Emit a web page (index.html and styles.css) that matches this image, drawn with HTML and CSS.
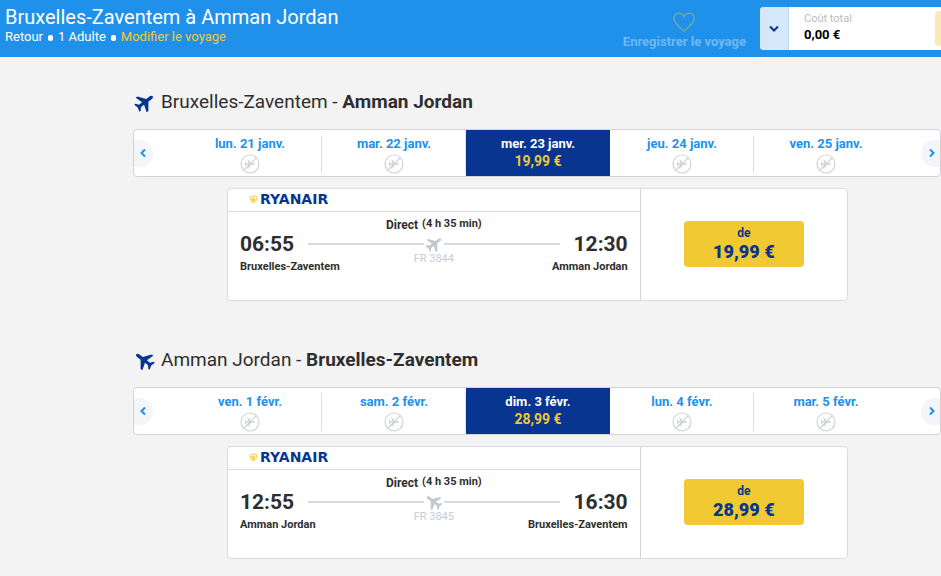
FILE: index.html
```html
<!DOCTYPE html>
<html lang="fr">
<head>
  <meta charset="UTF-8" />
  <meta name="viewport" content="width=device-width, initial-scale=1.0"/>
  <title>Bruxelles-Zaventem à Amman Jordan</title>
  <link rel="stylesheet" href="styles.css">
</head>
<body>

  <!-- Shared icons -->
  <svg class="sprite" aria-hidden="true">
    <symbol id="plane" viewBox="0 0 24 24">
      <path transform="rotate(53 12 12)" d="M12-1c-1.400 0-2.200 1.700-2.200 3.500v5L.5 14.500v2.800L10 14.200v5L6.500 22v2.200l5.500-1.500 5.500 1.500V22L14 19.200v-5l9.500 3.100v-2.800l-9.300-7v-5C14.200.7 13.400-1 12-1z"/>
    </symbol>
    <symbol id="no-flight" viewBox="0 0 20 20">
      <circle cx="10" cy="10" r="9" fill="none" stroke="currentColor" stroke-width="1.200"/>
      <path transform="translate(4 4) scale(.5) rotate(90 12 12)" fill="currentColor" d="M21 18v-2l-7.500-7V3.500c0-1-.7-2-1.500-2s-1.500 1-1.500 2V9L3 16v2l7.500-3.500V19l-3 2v1.500l4.500-1 4.500 1V21l-3-2v-4.500z"/>
      <path d="M3.500 16.500l13-13" stroke="currentColor" stroke-width="1.200"/>
    </symbol>
    <symbol id="harp" viewBox="0 0 9 9">
      <path fill="none" stroke="currentColor" d="M1 2.500C2 .5 3.500 2 5 1.200S8 1 8 2.500C8 5 6 7 4.500 8.200 3 7.500 1.500 5 1 2.500zM2.500 3l2 4M4 2.800l1 3.500M5.800 2.500L5 6"/>
    </symbol>
  </svg>

  <header class="trip-bar">
    <div class="trip">
      <h1>Bruxelles-Zaventem à Amman Jordan</h1>
      <div class="trip-info">
        <span>Retour</span><i class="dot"></i><span>1 Adulte</span><i class="dot"></i><a href="#">Modifier le voyage</a>
      </div>
    </div>
    <button class="save-trip" disabled>
      <svg width="24" height="20" viewBox="0 0 24 20"><path d="M12 19C7 14.800 1.800 11.200 1.800 6.500 1.800 3.300 4 1.200 6.700 1.200c2.300 0 4.200 1.300 5.300 3.400 1.100-2.100 3-3.400 5.300-3.400 2.700 0 4.900 2.100 4.900 5.300 0 4.700-5.200 8.300-10.200 12.500z"/></svg>
      <span>Enregistrer le voyage</span>
    </button>
    <div class="basket">
      <button class="basket-toggle" aria-label="Détails">
        <svg width="10" height="8" viewBox="0 0 10 8"><path d="M1 1.500l4 4 4-4"/></svg>
      </button>
      <div class="total">
        <span class="total-label">Coût total</span>
        <span class="total-price">0,00 €</span>
      </div>
      <button class="continue" disabled aria-label="Continuer"></button>
    </div>
  </header>

  <main>
    <!-- Outbound -->
    <section class="journey">
      <h2><svg class="plane"><use href="#plane"/></svg><span>Bruxelles-Zaventem - <b>Amman Jordan</b></span></h2>

      <div class="carousel">
        <button class="arrow left" aria-label="Précédent"><svg width="8" height="10" viewBox="0 0 8 10"><path d="M6 1.500L2.500 5 6 8.500"/></svg></button>
        <div class="days">
          <button class="day"><span>lun. 21 janv.</span><svg><use href="#no-flight"/></svg></button>
          <button class="day"><span>mar. 22 janv.</span><svg><use href="#no-flight"/></svg></button>
          <button class="day active"><span>mer. 23 janv.</span><span class="day-price">19,99 €</span></button>
          <button class="day"><span>jeu. 24 janv.</span><svg><use href="#no-flight"/></svg></button>
          <button class="day"><span>ven. 25 janv.</span><svg><use href="#no-flight"/></svg></button>
        </div>
        <button class="arrow right" aria-label="Suivant"><svg width="8" height="10" viewBox="0 0 8 10"><path d="M2 1.500L5.500 5 2 8.500"/></svg></button>
      </div>

      <div class="flight">
        <div class="flight-info">
          <div class="carrier"><svg><use href="#harp"/></svg><span>RYANAIR</span></div>
          <div class="route">
            <div class="duration"><span>Direct</span><small>(4 h 35 min)</small></div>
            <div class="times">
              <span class="time">06:55</span>
              <span class="line"></span>
              <svg class="plane"><use href="#plane"/></svg>
              <span class="line"></span>
              <span class="time">12:30</span>
            </div>
            <div class="number">FR 3844</div>
            <div class="airports"><span>Bruxelles-Zaventem</span><span>Amman Jordan</span></div>
          </div>
        </div>
        <div class="fare">
          <button class="select"><span>de</span><strong>19,99 €</strong></button>
        </div>
      </div>
    </section>

    <!-- Inbound -->
    <section class="journey inbound">
      <h2><svg class="plane"><use href="#plane"/></svg><span>Amman Jordan - <b>Bruxelles-Zaventem</b></span></h2>

      <div class="carousel">
        <button class="arrow left" aria-label="Précédent"><svg width="8" height="10" viewBox="0 0 8 10"><path d="M6 1.500L2.500 5 6 8.500"/></svg></button>
        <div class="days">
          <button class="day"><span>ven. 1 févr.</span><svg><use href="#no-flight"/></svg></button>
          <button class="day"><span>sam. 2 févr.</span><svg><use href="#no-flight"/></svg></button>
          <button class="day active"><span>dim. 3 févr.</span><span class="day-price">28,99 €</span></button>
          <button class="day"><span>lun. 4 févr.</span><svg><use href="#no-flight"/></svg></button>
          <button class="day"><span>mar. 5 févr.</span><svg><use href="#no-flight"/></svg></button>
        </div>
        <button class="arrow right" aria-label="Suivant"><svg width="8" height="10" viewBox="0 0 8 10"><path d="M2 1.500L5.500 5 2 8.500"/></svg></button>
      </div>

      <div class="flight">
        <div class="flight-info">
          <div class="carrier"><svg><use href="#harp"/></svg><span>RYANAIR</span></div>
          <div class="route">
            <div class="duration"><span>Direct</span><small>(4 h 35 min)</small></div>
            <div class="times">
              <span class="time">12:55</span>
              <span class="line"></span>
              <svg class="plane"><use href="#plane"/></svg>
              <span class="line"></span>
              <span class="time">16:30</span>
            </div>
            <div class="number">FR 3845</div>
            <div class="airports"><span>Amman Jordan</span><span>Bruxelles-Zaventem</span></div>
          </div>
        </div>
        <div class="fare">
          <button class="select"><span>de</span><strong>28,99 €</strong></button>
        </div>
      </div>
    </section>
  </main>

</body>
</html>
```
FILE: styles.css
```css
* {
  box-sizing: border-box;
}

body {
  margin: 0;
  font-family: Roboto, Arial, sans-serif;
  background: #f3f3f3;
  color: #2e2e2e;
}

button {
  font-family: inherit;
  border: none;
  padding: 0;
  background: none;
  cursor: pointer;
}

.sprite {
  display: none;
}

/* Header */
.trip-bar {
  display: flex;
  height: 57px;
  background: #2091eb;
  color: #fff;
  overflow: hidden;
}

.trip {
  flex: 1;
  padding: 6px 5px;
}

.trip h1 {
  margin: 0;
  font-size: 20px;
  font-weight: 400;
  line-height: 22px;
}

.trip-info {
  display: flex;
  align-items: center;
  font-size: 13px;
  line-height: 18px;
}

.trip-info a {
  color: #f1c933;
  text-decoration: none;
}

.dot {
  width: 5px;
  height: 6px;
  margin: 2px 5px 0;
  border-radius: 2px;
  background: #fff;
}

.save-trip {
  display: flex;
  flex-direction: column;
  align-items: center;
  padding-top: 12px;
  margin-right: 14px;
  color: #70b9f2;
  font-size: 13px;
  font-weight: 700;
  line-height: 20px;
}

.save-trip svg {
  flex: none;
  fill: none;
  stroke: #74a8a0;
  stroke-width: 1.4;
}

.basket {
  display: flex;
  width: 181px;
  height: 43px;
  margin-top: 7px;
  background: #fff;
  border-radius: 4px 0 0 4px;
}

.basket-toggle {
  width: 29px;
  border-right: 1px solid #bcdaf5;
  border-radius: 4px 0 0 4px;
  background: #d5e8f9;
}

.basket-toggle svg {
  fill: none;
  stroke: #073590;
  stroke-width: 2;
}

.total {
  flex: 1;
  display: flex;
  flex-direction: column;
  padding: 4px 15px;
}

.total-label {
  color: #b9bcc2;
  font-size: 11px;
  line-height: 15px;
}

.total-price {
  color: #000;
  font-size: 13px;
  font-weight: 700;
  line-height: 18px;
}

.continue {
  width: 6px;
  margin: 4px 0;
  border-radius: 4px 0 0 4px;
  background: #f8e9b6;
}

/* Journeys */
main {
  padding: 33px 0 0 133px;
}

.journey {
  margin-bottom: 47px;
}

.journey:last-child {
  margin-bottom: 0;
}

h2 {
  display: flex;
  align-items: center;
  gap: 5px;
  margin: 0 0 15px;
  font-size: 19px;
  font-weight: 400;
  line-height: 24px;
}

h2 .plane {
  width: 23px;
  height: 19px;
  color: #073590;
}

.plane {
  fill: currentColor;
  overflow: visible;
}

.inbound .plane {
  transform: scaleX(-1);
}

.carousel {
  position: relative;
  height: 48px;
  padding: 0 42px 0 44px;
  background: #fff;
  border: 1px solid #d1d3d8;
  border-radius: 4px;
}

.days {
  display: grid;
  grid-template-columns: repeat(5, 1fr);
  height: 100%;
}

.day {
  position: relative;
  display: flex;
  flex-direction: column;
  align-items: center;
  padding-top: 6px;
  color: #2091eb;
  font-size: 13px;
  font-weight: 700;
  line-height: 16px;
}

.day svg {
  width: 20px;
  height: 20px;
  margin-top: 2px;
  color: #d1d4d7;
}

.day::after {
  content: "";
  position: absolute;
  top: 5px;
  bottom: 3px;
  right: 0;
  width: 1px;
  background: #dcdee2;
}

.day:last-child::after,
.day.active::after {
  display: none;
}

.day.active {
  background: #073590;
  color: #fff;
}

.day-price {
  color: #f1c933;
  font-size: 14px;
  line-height: 18px;
}

.arrow {
  position: absolute;
  top: 10px;
  width: 19px;
  height: 27px;
  background: #f3f5f8;
}

.arrow svg {
  fill: none;
  stroke: #2091eb;
  stroke-width: 2;
}

.arrow.left {
  left: 0;
  padding-right: 2px;
  border-radius: 0 14px 14px 0;
}

.arrow.right {
  right: 0;
  padding-left: 2px;
  border-radius: 14px 0 0 14px;
}

/* Flight card */
.flight {
  display: grid;
  grid-template-columns: 2fr 1fr;
  margin: 11px 93px 0 94px;
  background: #fff;
  border: 1px solid #d8dbe2;
  border-radius: 4px;
}

.flight-info {
  border-right: 1px solid #d1d3d8;
}

.carrier {
  display: flex;
  align-items: center;
  gap: 2px;
  height: 23px;
  padding: 0 21px 2px;
  border-bottom: 1px solid #d8dbe2;
  color: #073590;
  font-family: "DejaVu Sans", sans-serif;
  font-size: 14px;
  font-weight: 700;
}

.carrier svg {
  width: 9px;
  height: 9px;
  color: #f1c933;
}

.route {
  height: 88px;
  padding: 5px 12px 0;
}

.duration {
  display: flex;
  justify-content: center;
  gap: 4px;
  font-size: 12px;
  font-weight: 700;
  line-height: 16px;
}

.duration small {
  font-size: 11px;
  line-height: 14px;
}

.times {
  display: flex;
  align-items: center;
  height: 22px;
}

.time {
  font-size: 21px;
  font-weight: 700;
}

.line {
  flex: 1;
  height: 2px;
  background: #d8dbde;
}

.time + .line {
  margin-left: 14px;
}

.plane + .line {
  margin-right: 14px;
}

.times .plane {
  width: 16px;
  height: 16px;
  margin: 0 2px;
  color: #c2c8cd;
}

.number {
  text-align: center;
  color: #c9ccd1;
  font-size: 11px;
  line-height: 8px;
}

.airports {
  display: flex;
  justify-content: space-between;
  font-size: 11px;
  font-weight: 700;
  line-height: 8px;
}

.fare {
  display: flex;
  align-items: center;
  justify-content: center;
  padding-bottom: 2px;
}

.select {
  display: flex;
  flex-direction: column;
  align-items: center;
  width: 120px;
  padding: 4px 0;
  border-radius: 4px;
  background: #f1c933;
  color: #073590;
  font-size: 12px;
  font-weight: 700;
  line-height: 16px;
}

.select strong {
  font-size: 18px;
  line-height: 22px;
}
```
